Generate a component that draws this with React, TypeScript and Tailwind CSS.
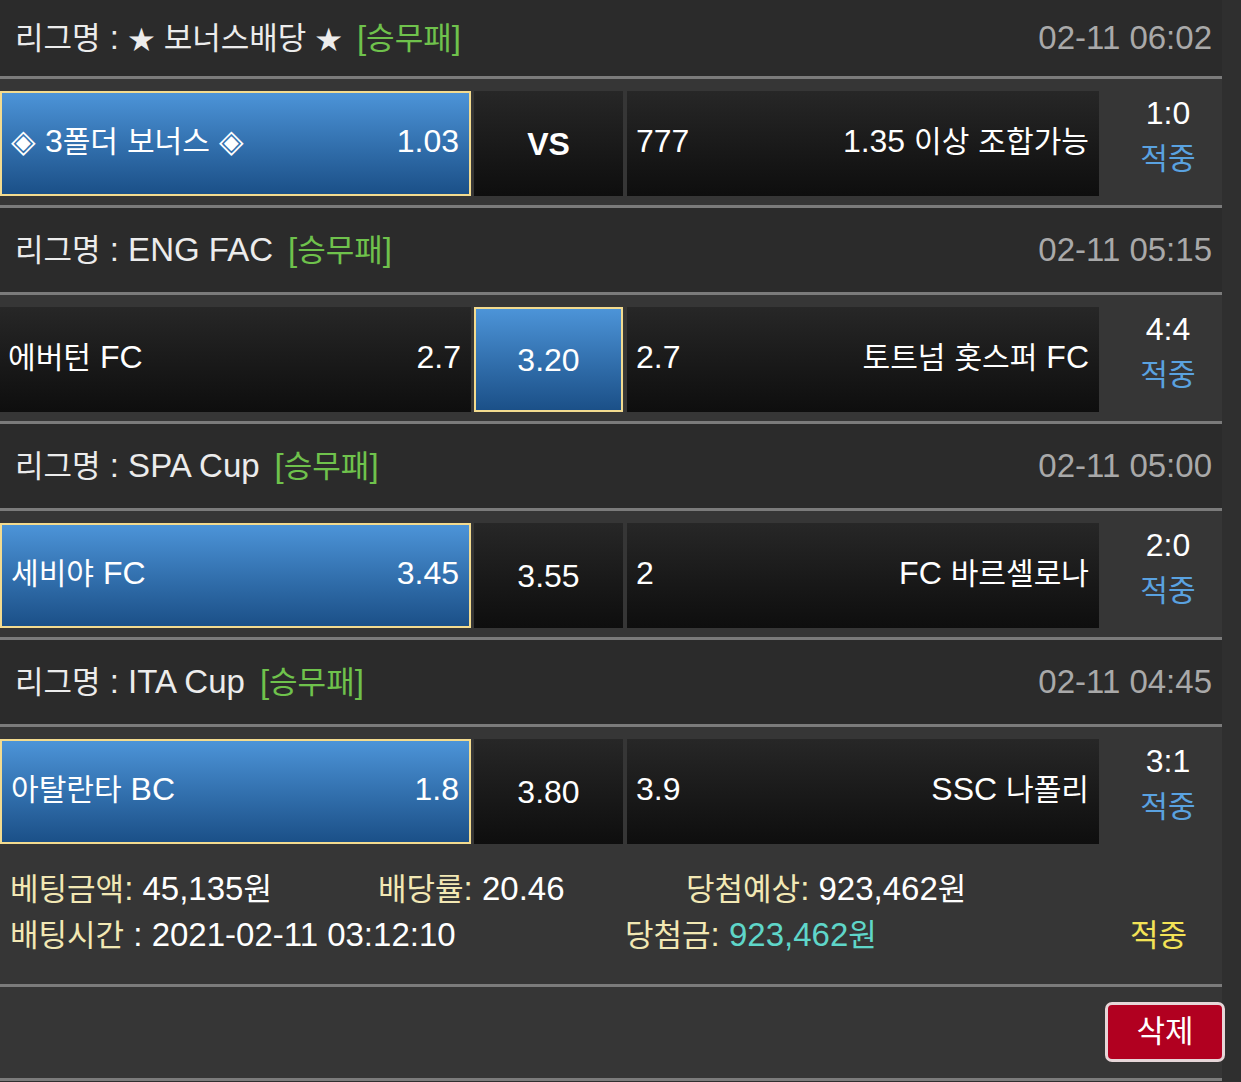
import React from "react";

type Match = {
  league: string;
  date: string;
  home: string;
  homeOdds: string;
  draw: string;
  drawBold?: boolean;
  awayOdds: string;
  away: string;
  score: string;
  pick: "home" | "draw" | "away";
};

const matches: Match[] = [
  {
    league: "★ 보너스배당 ★",
    date: "02-11 06:02",
    home: "◈ 3폴더 보너스 ◈",
    homeOdds: "1.03",
    draw: "VS",
    drawBold: true,
    awayOdds: "777",
    away: "1.35 이상 조합가능",
    score: "1:0",
    pick: "home",
  },
  {
    league: "ENG FAC",
    date: "02-11 05:15",
    home: "에버턴 FC",
    homeOdds: "2.7",
    draw: "3.20",
    awayOdds: "2.7",
    away: "토트넘 홋스퍼 FC",
    score: "4:4",
    pick: "draw",
  },
  {
    league: "SPA Cup",
    date: "02-11 05:00",
    home: "세비야 FC",
    homeOdds: "3.45",
    draw: "3.55",
    awayOdds: "2",
    away: "FC 바르셀로나",
    score: "2:0",
    pick: "home",
  },
  {
    league: "ITA Cup",
    date: "02-11 04:45",
    home: "아탈란타 BC",
    homeOdds: "1.8",
    draw: "3.80",
    awayOdds: "3.9",
    away: "SSC 나폴리",
    score: "3:1",
    pick: "home",
  },
];

// Korean runs (and the star glyph) are rendered a bit smaller so that they keep the reference's narrow widths
function T({ s }: { s: string }) {
  const parts = s.split(/([\u3131-\u318E\uAC00-\uD7A3]+|★)/);
  return (
    <>
      {parts.map((p, i) =>
        p === "★" ? (
          <span key={i} className="text-[0.8em]">
            {p}
          </span>
        ) : /[\u3131-\u318E\uAC00-\uD7A3]/.test(p) ? (
          <span key={i} className="text-[0.94em]">
            {p}
          </span>
        ) : (
          <React.Fragment key={i}>{p}</React.Fragment>
        )
      )}
    </>
  );
}

const Sep = () => <div className="h-[3px] bg-[#7b7b7b]" />;

function Header({ m, first }: { m: Match; first: boolean }) {
  return (
    <div
      className={`flex items-center justify-between bg-[#2b2b2b] pl-[15px] pr-[10px] ${
        first ? "h-[76px]" : "h-[84px]"
      }`}
    >
      <div className="flex items-center text-[33px] text-[#ececec]">
        <span>
          <T s={`리그명 : ${m.league}`} />
        </span>
        <span className="ml-[15px] text-[#6fc24c]">
          <T s="[승무패]" />
        </span>
      </div>
      <div className="text-[33px] text-[#a9a9a9]">{m.date}</div>
    </div>
  );
}

function Row({ m }: { m: Match }) {
  const sel = "border-2 border-[#f3db8f] bg-gradient-to-b from-[#4c94d8] to-[#1b5088]";
  const dark = "bg-gradient-to-b from-[#272727] to-[#0e0e0e]";
  return (
    <div className="flex gap-[3px] bg-[#363636] pt-[12px] pb-[9px]">
      <div
        className={`flex h-[105px] w-[471px] items-center justify-between pb-[6px] text-[32px] text-white ${
          m.pick === "home" ? `${sel} pl-[9px] pr-[10px]` : `${dark} pl-[8px] pr-[10px]`
        }`}
      >
        <span>
          <T s={m.home} />
        </span>
        <span>{m.homeOdds}</span>
      </div>
      <div
        className={`flex h-[105px] w-[149px] items-center justify-center text-white ${
          m.drawBold ? "text-[32px] font-bold" : "text-[32px]"
        } ${m.pick === "draw" ? sel : dark}`}
      >
        {m.draw}
      </div>
      <div
        className={`ml-[1px] flex h-[105px] w-[472px] items-center justify-between pb-[6px] pl-[9px] pr-[10px] text-[32px] text-white ${dark}`}
      >
        <span>{m.awayOdds}</span>
        <span>
          <T s={m.away} />
        </span>
      </div>
      <div className="flex flex-1 flex-col items-center pl-[12px] text-[32px] leading-[45px]">
        <span className="text-white">{m.score}</span>
        <span className="text-[#5aa2e0]">
          <T s="적중" />
        </span>
      </div>
    </div>
  );
}

export default function App() {
  return (
    <div
      className="min-h-[1082px] w-[1241px] overflow-hidden bg-[#2f2f2f]"
      style={{ fontFamily: '"Liberation Sans", "Noto Sans CJK KR", sans-serif' }}
    >
      <div className="w-[1222px]">
        {matches.map((m, i) => (
          <div key={i}>
            {i > 0 && <Sep />}
            <Header m={m} first={i === 0} />
            <Sep />
            <Row m={m} />
          </div>
        ))}
        <div className="bg-[#363636] pt-[13px] pb-[26px] text-[33px] leading-[45px]">
          <div className="flex pl-[10px]">
            <div className="w-[368px]">
              <span className="text-[#f2e8b4]">
                <T s="베팅금액:" />
              </span>
              <span className="text-white">
                <T s=" 45,135원" />
              </span>
            </div>
            <div className="w-[308px]">
              <span className="text-[#f2e8b4]">
                <T s="배당률:" />
              </span>
              <span className="text-white"> 20.46</span>
            </div>
            <div>
              <span className="text-[#f2e8b4]">
                <T s="당첨예상:" />
              </span>
              <span className="text-white">
                <T s=" 923,462원" />
              </span>
            </div>
          </div>
          <div className="flex pl-[10px]">
            <div className="w-[615px]">
              <span className="text-[#f2e8b4]">
                <T s="배팅시간" />
              </span>
              <span className="text-white"> : 2021-02-11 03:12:10</span>
            </div>
            <div className="w-[505px]">
              <span className="text-[#f2e8b4]">
                <T s="당첨금:" />
              </span>
              <span className="text-[#5fd6c9]">
                <T s=" 923,462원" />
              </span>
            </div>
            <div className="text-[#f3e356]">
              <T s="적중" />
            </div>
          </div>
        </div>
        <Sep />
        <div className="flex h-[91px] items-start justify-end bg-[#363636] pt-[15px]">
          <button className="mr-[-3px] flex h-[60px] w-[120px] items-center justify-center rounded-[7px] border-[3px] border-[#e6d6d8] bg-[#b10020] text-[33px] text-white">
            <T s="삭제" />
          </button>
        </div>
        <Sep />
      </div>
    </div>
  );
}
